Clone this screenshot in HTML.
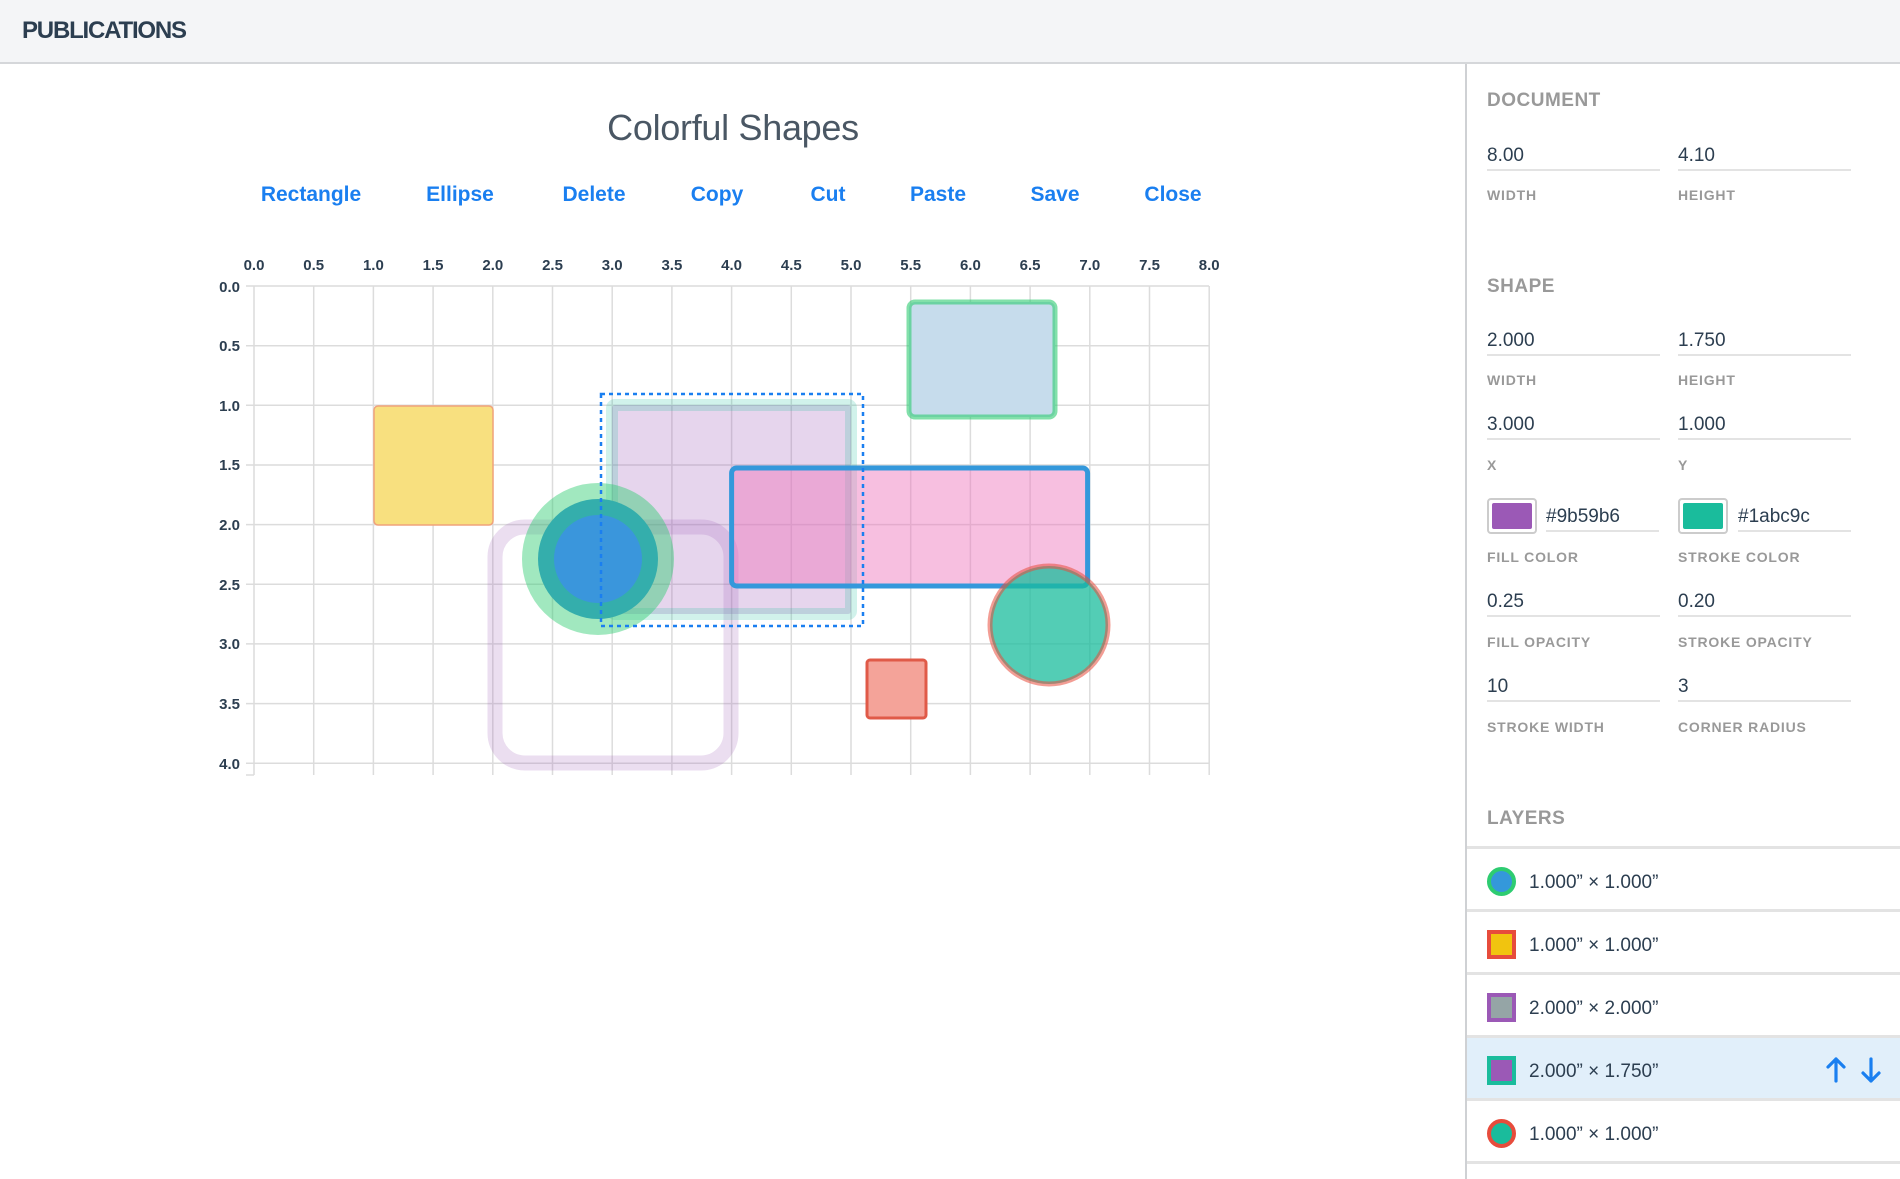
<!DOCTYPE html>
<html><head><meta charset="utf-8"><style>
*{box-sizing:border-box;margin:0;padding:0}
body{width:1900px;height:1179px;overflow:hidden;background:#fff;font-family:"Liberation Sans",sans-serif;position:relative;color:#2c3e50}
.hdr{position:absolute;left:0;top:0;width:1900px;height:64px;background:#f4f5f7;border-bottom:2px solid #d5d7da}
.hdr span{position:absolute;left:22px;top:17px;font-size:24px;font-weight:bold;letter-spacing:-1.2px;color:#2c3e50}
.title{position:absolute;left:0;width:1466px;text-align:center;top:107px;font-size:36px;font-weight:normal;color:#4a5764;letter-spacing:-0.3px}
.tb{position:absolute;top:183px;font-size:21px;font-weight:bold;color:#1a7ff0;transform:translateX(-50%);white-space:nowrap}
.side{position:absolute;left:1465px;top:64px;width:435px;height:1115px;border-left:2px solid #cfd1d4}
.sec{position:absolute;left:1487px;font-size:19px;font-weight:bold;color:#999;letter-spacing:.5px}
.val{position:absolute;font-size:19px;color:#2c3e50;width:173px;border-bottom:2px solid #e3e3e3;height:28px;padding-top:2px}
.lab{position:absolute;font-size:14px;font-weight:bold;color:#999;letter-spacing:.8px}
.sw{position:absolute;width:50px;height:36px;border:2px solid #ccc;border-radius:4px;padding:3px;background:#fff}
.sw div{width:100%;height:100%;border-radius:2px}
.row{position:absolute;left:1467px;width:433px;height:63px;border-bottom:3px solid #e3e3e3}
.row .t{position:absolute;left:62px;top:23px;font-size:19px;color:#2c3e50}
.row .ic{position:absolute;left:20px;top:18px;width:29px;height:29px;border:4px solid}
</style></head><body>
<div class="hdr"><span>PUBLICATIONS</span></div>
<div class="title">Colorful Shapes</div>
<div class="tb" style="left:311px">Rectangle</div>
<div class="tb" style="left:460px">Ellipse</div>
<div class="tb" style="left:594px">Delete</div>
<div class="tb" style="left:717px">Copy</div>
<div class="tb" style="left:828px">Cut</div>
<div class="tb" style="left:938px">Paste</div>
<div class="tb" style="left:1055px">Save</div>
<div class="tb" style="left:1173px">Close</div>

<svg style="position:absolute;left:0;top:0" width="1466" height="1179">
<g stroke="#dcdcdc" stroke-width="1.5">
<line x1="254" y1="286" x2="254" y2="775"/><line x1="313.7" y1="286" x2="313.7" y2="775"/><line x1="373.4" y1="286" x2="373.4" y2="775"/><line x1="433.1" y1="286" x2="433.1" y2="775"/><line x1="492.8" y1="286" x2="492.8" y2="775"/><line x1="552.5" y1="286" x2="552.5" y2="775"/><line x1="612.2" y1="286" x2="612.2" y2="775"/><line x1="671.9" y1="286" x2="671.9" y2="775"/><line x1="731.6" y1="286" x2="731.6" y2="775"/><line x1="791.3" y1="286" x2="791.3" y2="775"/><line x1="851" y1="286" x2="851" y2="775"/><line x1="910.7" y1="286" x2="910.7" y2="775"/><line x1="970.4" y1="286" x2="970.4" y2="775"/><line x1="1030.1" y1="286" x2="1030.1" y2="775"/><line x1="1089.8" y1="286" x2="1089.8" y2="775"/><line x1="1149.5" y1="286" x2="1149.5" y2="775"/><line x1="1209.2" y1="286" x2="1209.2" y2="775"/>
<line x1="246" y1="286" x2="1209" y2="286"/><line x1="246" y1="345.7" x2="1209" y2="345.7"/><line x1="246" y1="405.3" x2="1209" y2="405.3"/><line x1="246" y1="465" x2="1209" y2="465"/><line x1="246" y1="524.6" x2="1209" y2="524.6"/><line x1="246" y1="584.3" x2="1209" y2="584.3"/><line x1="246" y1="643.9" x2="1209" y2="643.9"/><line x1="246" y1="703.6" x2="1209" y2="703.6"/><line x1="246" y1="763.2" x2="1209" y2="763.2"/>
<line x1="246" y1="775" x2="254" y2="775"/>
</g>
<g font-family="Liberation Sans" font-size="15" font-weight="bold" fill="#2c3e50" text-anchor="middle">
<text x="254" y="270">0.0</text><text x="313.7" y="270">0.5</text><text x="373.4" y="270">1.0</text><text x="433.1" y="270">1.5</text><text x="492.8" y="270">2.0</text><text x="552.5" y="270">2.5</text><text x="612.2" y="270">3.0</text><text x="671.9" y="270">3.5</text><text x="731.6" y="270">4.0</text><text x="791.3" y="270">4.5</text><text x="851" y="270">5.0</text><text x="910.7" y="270">5.5</text><text x="970.4" y="270">6.0</text><text x="1030.1" y="270">6.5</text><text x="1089.8" y="270">7.0</text><text x="1149.5" y="270">7.5</text><text x="1209.2" y="270">8.0</text>
</g>
<g font-family="Liberation Sans" font-size="15" font-weight="bold" fill="#2c3e50" text-anchor="end">
<text x="240" y="292">0.0</text><text x="240" y="351">0.5</text><text x="240" y="411">1.0</text><text x="240" y="470">1.5</text><text x="240" y="530">2.0</text><text x="240" y="590">2.5</text><text x="240" y="649">3.0</text><text x="240" y="709">3.5</text><text x="240" y="769">4.0</text>
</g>
<rect x="374" y="406" width="119" height="119" rx="4" fill="#f8e07f" stroke="#f0a27a" stroke-width="1.5"/>
<rect x="909" y="302" width="146" height="115" rx="6" fill="#c6dcec" stroke="rgba(46,204,113,.6)" stroke-width="5"/>
<rect x="495" y="527" width="236" height="236" rx="30" fill="none" stroke="rgba(155,89,182,.2)" stroke-width="15"/>
<rect x="612" y="405" width="239" height="209" rx="3" fill="rgba(155,89,182,.25)" stroke="rgba(26,188,156,.2)" stroke-width="12"/>
<circle cx="598" cy="559" r="60" fill="#3a96dc" stroke="rgba(46,204,113,.45)" stroke-width="32"/>
<rect x="731.6" y="468" width="356" height="118" rx="5" fill="rgba(238,120,190,.47)" stroke="#3498db" stroke-width="5"/>
<circle cx="1049" cy="625" r="59" fill="rgba(26,188,156,.75)" stroke="rgba(231,76,60,.55)" stroke-width="5"/>
<rect x="867" y="660" width="59" height="58" rx="3" fill="#f4a399" stroke="#e05a48" stroke-width="3"/>
<rect x="601" y="394" width="262" height="232" fill="none" stroke="#1a7ff0" stroke-width="2.5" stroke-dasharray="4 4"/>
</svg>

<div class="side"></div>
<div class="sec" style="top:90px">DOCUMENT</div>
<div class="val" style="left:1487px;top:143px">8.00</div><div class="val" style="left:1678px;top:143px">4.10</div>
<div class="lab" style="left:1487px;top:187px">WIDTH</div><div class="lab" style="left:1678px;top:187px">HEIGHT</div>
<div class="sec" style="top:276px">SHAPE</div>
<div class="val" style="left:1487px;top:328px">2.000</div><div class="val" style="left:1678px;top:328px">1.750</div>
<div class="lab" style="left:1487px;top:372px">WIDTH</div><div class="lab" style="left:1678px;top:372px">HEIGHT</div>
<div class="val" style="left:1487px;top:412px">3.000</div><div class="val" style="left:1678px;top:412px">1.000</div>
<div class="lab" style="left:1487px;top:457px">X</div><div class="lab" style="left:1678px;top:457px">Y</div>
<div class="sw" style="left:1487px;top:498px"><div style="background:#9b59b6"></div></div>
<div class="val" style="left:1546px;top:504px;width:113px">#9b59b6</div>
<div class="sw" style="left:1678px;top:498px"><div style="background:#1abc9c"></div></div>
<div class="val" style="left:1738px;top:504px;width:113px">#1abc9c</div>
<div class="lab" style="left:1487px;top:549px">FILL COLOR</div><div class="lab" style="left:1678px;top:549px">STROKE COLOR</div>
<div class="val" style="left:1487px;top:589px">0.25</div><div class="val" style="left:1678px;top:589px">0.20</div>
<div class="lab" style="left:1487px;top:634px">FILL OPACITY</div><div class="lab" style="left:1678px;top:634px">STROKE OPACITY</div>
<div class="val" style="left:1487px;top:674px">10</div><div class="val" style="left:1678px;top:674px">3</div>
<div class="lab" style="left:1487px;top:719px">STROKE WIDTH</div><div class="lab" style="left:1678px;top:719px">CORNER RADIUS</div>
<div class="sec" style="top:808px">LAYERS</div>
<div style="position:absolute;left:1467px;top:846px;width:433px;border-top:3px solid #e3e3e3"></div>
<div class="row" style="top:849px"><div class="ic" style="border-radius:50%;background:#3498db;border-color:#2ecc71"></div><div class="t">1.000” × 1.000”</div></div>
<div class="row" style="top:912px"><div class="ic" style="background:#f1c40f;border-color:#e74c3c"></div><div class="t">1.000” × 1.000”</div></div>
<div class="row" style="top:975px"><div class="ic" style="background:#95a5a6;border-color:#9b59b6"></div><div class="t">2.000” × 2.000”</div></div>
<div class="row" style="top:1038px;background:#e1effa"><div class="ic" style="background:#9b59b6;border-color:#1abc9c"></div><div class="t">2.000” × 1.750”</div>
<svg style="position:absolute;left:359px;top:18px" width="70" height="28" fill="none" stroke="#1a7ff0" stroke-width="3.2" stroke-linecap="round" stroke-linejoin="round"><path d="M10 25V3M2 11l8-8 8 8"/><path d="M45 3v22M37 17l8 8 8-8"/></svg></div>
<div class="row" style="top:1101px"><div class="ic" style="border-radius:50%;background:#1abc9c;border-color:#e74c3c"></div><div class="t">1.000” × 1.000”</div></div>
</body></html>
